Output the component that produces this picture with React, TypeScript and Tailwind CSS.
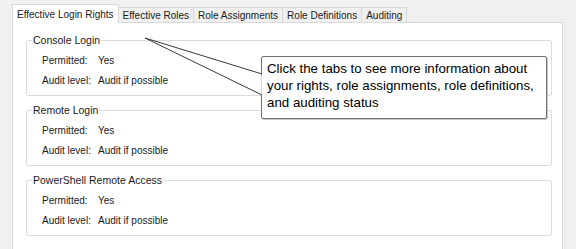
import React from 'react';

const tabs = ['Effective Login Rights', 'Effective Roles', 'Role Assignments', 'Role Definitions', 'Auditing'];

const groups = [
  { title: 'Console Login', permitted: 'Yes', audit: 'Audit if possible' },
  { title: 'Remote Login', permitted: 'Yes', audit: 'Audit if possible' },
  { title: 'PowerShell Remote Access', permitted: 'Yes', audit: 'Audit if possible' },
];

function GroupBox({ title, permitted, audit }: { title: string; permitted: string; audit: string }) {
  return (
    <div className="relative h-[56px] border border-[#dcdcdc] rounded-[2px] pt-[9px] pl-[15px]">
      <span className="absolute left-[5px] -top-[8px] bg-white px-[1px] leading-[14px] text-[10.5px]">{title}</span>
      <div className="flex h-[20px] items-center">
        <span className="w-[56px]">Permitted:</span>
        <span>{permitted}</span>
      </div>
      <div className="flex h-[20px] items-center">
        <span className="w-[56px]">Audit level:</span>
        <span>{audit}</span>
      </div>
    </div>
  );
}

export default function App() {
  return (
    <div className="relative w-[576px] h-[249px] overflow-hidden bg-[#f0f0f0] text-[10px] text-[#1a1a1a] [font-family:'Liberation_Sans',Arial,sans-serif]">
      <div className="pl-[12px] pt-[4px]">
        <div className="flex items-end h-[18px]">
          {tabs.map((t, i) =>
            i === 0 ? (
              <div key={t} className="relative z-10 h-[19px] -mb-px px-[4px] flex items-center bg-white border border-b-0 border-[#d9d9d9]">
                {t}
              </div>
            ) : (
              <div key={t} className="h-[15px] px-[4px] flex items-center bg-[#f0f0f0] border border-b-0 border-l-0 border-[#d9d9d9]">
                {t}
              </div>
            )
          )}
        </div>
        <div className="w-[551px] h-[240px] bg-white border border-[#d9d9d9] pt-[17px] pl-[13px] pr-[10px] flex flex-col gap-[14px]">
          {groups.map((g) => (
            <GroupBox key={g.title} {...g} />
          ))}
        </div>
      </div>

      <svg className="absolute left-0 top-0" width="576" height="249">
        <polygon points="145,38 262,74 262,95" fill="white" stroke="#3a3a3a" strokeWidth="1" />
      </svg>
      <div className="absolute left-[261px] top-[56px] w-[286px] h-[63px] bg-white border border-[#707070] rounded-[2px] shadow-[1px_1px_0_#c8c8c8] pl-[5px] pt-[3px] text-[13.3px] leading-[17px] text-black">
        Click the tabs to see more information about your rights, role assignments, role definitions, and auditing status
      </div>
      <svg className="absolute left-0 top-0 pointer-events-none" width="576" height="249">
        <line x1="262" y1="75" x2="262" y2="94" stroke="white" strokeWidth="1.5" />
      </svg>
    </div>
  );
}
